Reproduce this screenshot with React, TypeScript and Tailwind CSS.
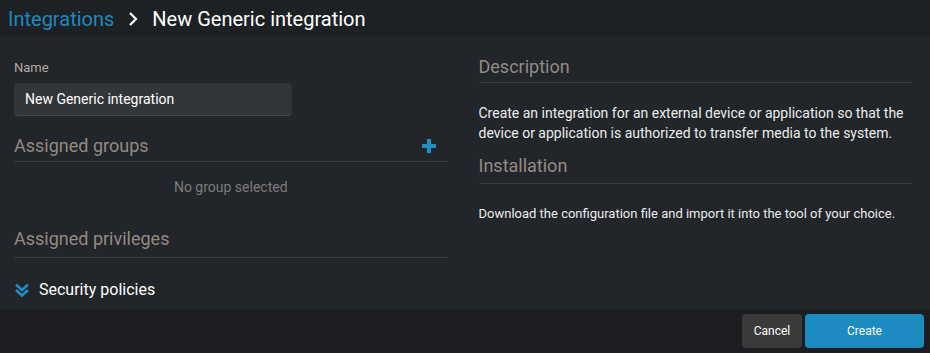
const font = { fontFamily: "Roboto, 'Liberation Sans', sans-serif" };

function SectionHeading({ children, action, className = "" }: { children: React.ReactNode; action?: React.ReactNode; className?: string }) {
  return (
    <div className={`flex items-center justify-between border-b border-[#3a3d41] ${className}`}>
      <h2 className="text-[18px] leading-6 text-[#938a83]">{children}</h2>
      {action}
    </div>
  );
}

function PlusIcon() {
  return (
    <svg width="14" height="14" viewBox="0 0 14 14" className="mr-[12px]" fill="#1f8fc8">
      <rect x="5" y="0" width="4" height="14" />
      <rect x="0" y="5" width="14" height="4" />
    </svg>
  );
}

function DoubleChevron() {
  return (
    <svg width="14" height="14" viewBox="0 0 14 14" fill="none" stroke="#1f8fc8" strokeWidth="2.6" strokeLinecap="butt">
      <path d="M1 1.5 L7 7 L13 1.5" />
      <path d="M1 7 L7 12.5 L13 7" />
    </svg>
  );
}

export default function App() {
  return (
    <div className="flex h-[353px] w-[930px] flex-col bg-[#222529] text-white" style={font}>
      {/* ── Breadcrumb header ── */}
      <header className="flex h-9 items-center gap-[13px] bg-[#1e2124] px-2 pt-px">
        <span className="text-[20px] text-[#1e88c0]">Integrations</span>
        <svg width="12" height="16" viewBox="0 0 12 16" fill="none" stroke="#ffffff" strokeWidth="2.2">
          <path d="M3 2 L9 8 L3 14" />
        </svg>
        <span className="text-[20px] text-white">New Generic integration</span>
      </header>

      {/* ── Body ── */}
      <main className="grid flex-1 grid-cols-2 gap-[31px] pl-[14px] pr-[18px] pt-[24px]">
        <section className="flex flex-col">
          <label className="text-[13px] leading-4 text-[#b3aaa3]">Name</label>
          <div className="mt-[7px] flex h-[33px] w-[278px] items-center rounded-sm border-b border-[#44484c] bg-[#333638] px-[11px] text-sm text-white">
            New Generic integration
          </div>

          <SectionHeading className="mt-[18px] pb-[3px]" action={<PlusIcon />}>
            Assigned groups
          </SectionHeading>
          <p className="mt-[15px] text-center text-sm leading-5 text-[#7c7c7c]">No group selected</p>

          <SectionHeading className="mt-[30px] pb-[6px]">Assigned privileges</SectionHeading>

          <div className="mt-[22px] flex items-center gap-[10px] pl-px">
            <DoubleChevron />
            <span className="text-base leading-5 text-white">Security policies</span>
          </div>
        </section>

        <section className="flex flex-col">
          <SectionHeading className="-mt-[5px] pb-[3px]">Description</SectionHeading>
          <p className="mt-5 text-sm leading-5 text-[#ececec]">
            Create an integration for an external device or application so that the device or application is authorized to transfer media to the system.
          </p>
          <SectionHeading className="mt-[11px] pb-[5px]">Installation</SectionHeading>
          <p className="mt-5 text-[13px] leading-5 text-[#ececec]">Download the configuration file and import it into the tool of your choice.</p>
        </section>
      </main>

      {/* ── Footer actions ── */}
      <footer className="flex h-11 items-center justify-end gap-[3px] bg-[#1c1e21] pr-[6px]">
        <button className="h-[34px] w-[60px] rounded-sm bg-[#3a3a3a] text-xs text-white">Cancel</button>
        <button className="h-[34px] w-[119px] rounded-sm bg-[#1b8bc2] text-xs text-white">Create</button>
      </footer>
    </div>
  );
}
